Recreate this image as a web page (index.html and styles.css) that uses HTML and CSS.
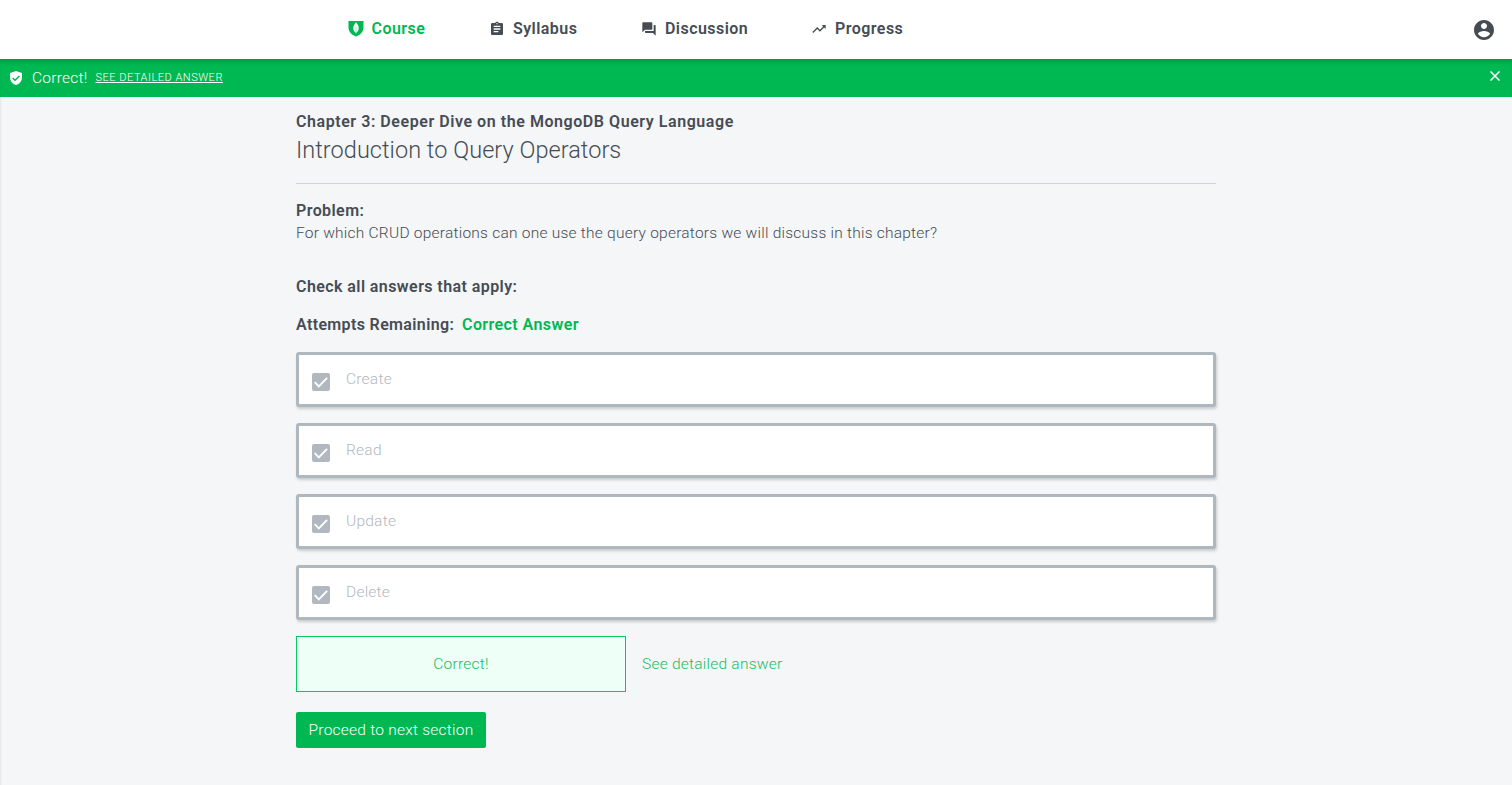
FILE: index.html
```html
<!DOCTYPE html>
<html lang="en">
<head>
<meta charset="utf-8">
<title>Introduction to Query Operators</title>
<link rel="stylesheet" href="styles.css">
</head>
<body>
<header class="topbar">
  <nav class="tabs">
    <a class="tab tab-active"><svg class="icon-leaf" viewBox="0 0 16 17"><path fill="currentColor" d="M.5 1h15v6.500c0 4.300-3.200 7.500-7.500 9C3.700 15 .5 11.800.5 7.500z"/><path fill="#fff" d="M8 2.300c-1.800 2-2.700 3.800-2.700 5.700 0 2 .9 3.500 2.300 4.600L8 14l.4-1.400c1.400-1.100 2.300-2.600 2.300-4.600C10.700 6.100 9.800 4.300 8 2.300z"/><path stroke="currentColor" stroke-width=".4" d="M8 6.500V12"/></svg><span class="t-course">Course</span></a>
    <a class="tab"><svg class="icon-tab" viewBox="0 0 24 24"><path fill="currentColor" d="M19 3h-4.180C14.400 1.840 13.300 1 12 1s-2.400.84-2.820 2H5c-1.100 0-2 .9-2 2v14c0 1.100.9 2 2 2h14c1.100 0 2-.9 2-2V5c0-1.100-.9-2-2-2zm-7 0c.55 0 1 .45 1 1s-.45 1-1 1-1-.45-1-1 .45-1 1-1zm2 14H7v-2h7v2zm3-4H7v-2h10v2zm0-4H7V7h10v2z"/></svg><span class="t-syllabus">Syllabus</span></a>
    <a class="tab"><svg class="icon-tab" viewBox="0 0 24 24"><path fill="currentColor" d="M21 6h-2v9H6v2c0 .55.45 1 1 1h11l4 4V7c0-.55-.45-1-1-1zm-4 6V3c0-.55-.45-1-1-1H3c-.55 0-1 .45-1 1v14l4-4h10c.55 0 1-.45 1-1z"/></svg><span class="t-discussion">Discussion</span></a>
    <a class="tab"><svg class="icon-tab" viewBox="0 0 24 24"><path fill="currentColor" d="M16 6l2.290 2.290-4.880 4.880-4-4L2 16.590 3.410 18l6-6 4 4 6.300-6.290L22 12V6z"/></svg><span class="t-progress">Progress</span></a>
  </nav>
  <svg class="icon-account" viewBox="0 0 24 24"><path fill="currentColor" d="M12 2C6.480 2 2 6.480 2 12s4.480 10 10 10 10-4.480 10-10S17.520 2 12 2zm0 3c1.660 0 3 1.340 3 3s-1.340 3-3 3-3-1.340-3-3 1.340-3 3-3zm0 14.200c-2.500 0-4.710-1.280-6-3.220.03-1.990 4-3.080 6-3.080 1.990 0 5.970 1.090 6 3.080-1.290 1.940-3.500 3.220-6 3.220z"/></svg>
</header>
<div class="banner">
  <svg class="icon-shield" viewBox="0 0 24 24"><path fill="#fff" d="M12 1.500L3 4.500V11c0 6 4 10.200 9 11.500 5-1.300 9-5.500 9-11.500V4.500z"/><path fill="none" stroke="#00b851" stroke-width="2.200" d="M7 12l3.500 3.500 6.500-6.500"/></svg>
  <span class="banner-title">Correct!</span>
  <a class="banner-link">SEE DETAILED ANSWER</a>
  <svg class="icon-close" viewBox="0 0 10 10"><path stroke="#fff" stroke-width="1.500" d="M.5.5l9 9M9.500.5l-9 9"/></svg>
</div>
<main class="page">
  <div class="content">
    <h2 class="chapter">Chapter 3: Deeper Dive on the MongoDB Query Language</h2>
    <h1 class="lesson">Introduction to Query Operators</h1>
    <h3 class="label problem">Problem:</h3>
    <p class="question">For which CRUD operations can one use the query operators we will discuss in this chapter?</p>
    <h3 class="label check">Check all answers that apply:</h3>
    <div class="attempts"><span class="label remaining">Attempts Remaining:</span><span class="label verdict">Correct Answer</span></div>
    <div class="answers">
      <div class="answer"><svg class="checkbox" viewBox="0 0 18 18"><rect width="18" height="18" rx="2" fill="#b1b8c0"/><path fill="none" stroke="#fff" stroke-width="1.900" d="M2.700 9.200l4.100 4.100 8.300-8.500"/></svg><span class="t-create">Create</span></div>
      <div class="answer"><svg class="checkbox" viewBox="0 0 18 18"><rect width="18" height="18" rx="2" fill="#b1b8c0"/><path fill="none" stroke="#fff" stroke-width="1.900" d="M2.700 9.200l4.100 4.100 8.300-8.500"/></svg><span class="t-read">Read</span></div>
      <div class="answer"><svg class="checkbox" viewBox="0 0 18 18"><rect width="18" height="18" rx="2" fill="#b1b8c0"/><path fill="none" stroke="#fff" stroke-width="1.900" d="M2.700 9.200l4.100 4.100 8.300-8.500"/></svg><span class="t-update">Update</span></div>
      <div class="answer"><svg class="checkbox" viewBox="0 0 18 18"><rect width="18" height="18" rx="2" fill="#b1b8c0"/><path fill="none" stroke="#fff" stroke-width="1.900" d="M2.700 9.200l4.100 4.100 8.300-8.500"/></svg><span class="t-delete">Delete</span></div>
    </div>
    <div class="result"><div class="result-box">Correct!</div><a class="detail-link">See detailed answer</a></div>
    <button class="proceed">Proceed to next section</button>
  </div>
</main>
</body>
</html>
```

FILE: styles.css
```css
* { box-sizing: border-box; }
body {
  margin: 0;
  height: 785px;
  overflow: hidden;
  display: flex;
  flex-direction: column;
  background: #f4f6f8;
  color: #464c53;
  font: 300 15.500px/22px Roboto, "Liberation Sans", sans-serif;
  letter-spacing: .235px;
}
h1, h2, h3, p { margin: 0; }
svg { flex: none; display: block; }
.topbar {
  height: 59px;
  flex: none;
  display: flex;
  justify-content: space-between;
  background: #fff;
  padding: 0 16px 0 347.500px;
}
.tabs { display: flex; height: 58px; }
.tab {
  display: flex;
  align-items: center;
  gap: 8px;
  font-weight: 600;
  font-size: 16px;
  letter-spacing: .45px;
}
.tab:nth-child(1) { width: 141.500px; color: #00b851; }
.tab:nth-child(2) { width: 152px; }
.tab:nth-child(3) { width: 170px; }
.icon-leaf { width: 16px; height: 17px; margin-top: -1px; }
.icon-tab { width: 16px; height: 16px; }
.icon-account { width: 24px; height: 24px; margin-top: 18px; }
.banner {
  height: 38px;
  flex: none;
  display: flex;
  align-items: center;
  padding: 0 12px 0 8px;
  color: #fff;
  background: #00b851;
  box-shadow: inset 0 5px 5px -3px rgba(0, 0, 0, .2);
}
.icon-shield { width: 16px; height: 16px; }
.banner-title { margin-left: 8px; width: 63.500px; }
.banner-link { font-size: 11px; letter-spacing: .52px; text-decoration: underline; }
.icon-close { width: 10px; height: 10px; margin: -4px 0 0 auto; }
.page {
  flex: 1;
  padding: 14px 296px 0;
  box-shadow: inset 2px 0 2px -1px rgba(0, 0, 0, .07);
}
.content { width: 920px; }
.chapter, .label {
  font-size: 16px;
  font-weight: 600;
  line-height: 22px;
  letter-spacing: .56px;
}
.label { letter-spacing: .42px; }
.lesson {
  font-size: 23.500px;
  font-weight: 300;
  letter-spacing: .04px;
  line-height: 32px;
  padding: 1px 0 17px;
  border-bottom: 1px solid #ccd6d8;
}
.problem { margin-top: 16px; }
.check { margin-top: 32px; }
.attempts { display: flex; margin-top: 16px; }
.remaining { width: 166px; letter-spacing: .36px; }
.verdict { color: #00b851; }
.answers { display: grid; gap: 16px; margin-top: 16px; }
.answer {
  height: 55px;
  display: flex;
  gap: 16px;
  padding: 13px;
  border: 3px solid #afb8bf;
  border-radius: 3px;
  background: #fff;
  color: #b1b8c0;
  box-shadow: 1px 2px 3px rgba(0, 0, 0, .18);
}
.checkbox { width: 18px; height: 18px; margin-top: 5px; }
.result { display: flex; gap: 16px; align-items: center; margin-top: 16px; color: #19bd60; }
.result-box {
  width: 330px;
  height: 56px;
  line-height: 54px;
  text-align: center;
  border: 1px solid #00cc61;
  background: #edfff7;
}
.proceed {
  display: block;
  width: 190px;
  height: 36px;
  margin-top: 20px;
  padding: 0;
  border: 0;
  border-radius: 2px;
  font: inherit;
  letter-spacing: inherit;
  color: #fff;
  background: #00b851;
}
```
